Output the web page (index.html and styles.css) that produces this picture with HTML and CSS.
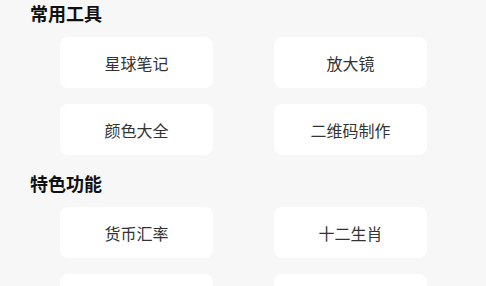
FILE: index.html
```html
<!DOCTYPE html>
<html lang="zh">
<head>
<meta charset="utf-8">
<link rel="stylesheet" href="styles.css">
</head>
<body>
  <section class="group">
    <h2 class="group-title">常用工具</h2>
    <div class="grid">
      <div class="card">星球笔记</div>
      <div class="card">放大镜</div>
      <div class="card">颜色大全</div>
      <div class="card">二维码制作</div>
    </div>
  </section>
  <section class="group">
    <h2 class="group-title">特色功能</h2>
    <div class="grid">
      <div class="card">货币汇率</div>
      <div class="card">十二生肖</div>
      <div class="card">&nbsp;</div>
      <div class="card">&nbsp;</div>
    </div>
  </section>
</body>
</html>
```
FILE: styles.css
```css
html, body {
  margin: 0;
  padding: 0;
  background: #f7f7f7;
  font-family: "Noto Sans CJK SC", "Noto Sans", sans-serif;
}
.group-title {
  margin: 15px 0 10px;
  padding-left: 30px;
  font-size: 18px;
  line-height: 27px;
  font-weight: 700;
  color: #111;
}
.group:first-child .group-title {
  margin-top: 0;
}
.grid {
  display: grid;
  grid-template-columns: 153px 153px;
  column-gap: 61px;
  row-gap: 16px;
  padding-left: 60px;
}
.card {
  height: 51px;
  background: #fff;
  border-radius: 8px;
  display: flex;
  align-items: center;
  justify-content: center;
  font-size: 16px;
  color: #333;
}
```
